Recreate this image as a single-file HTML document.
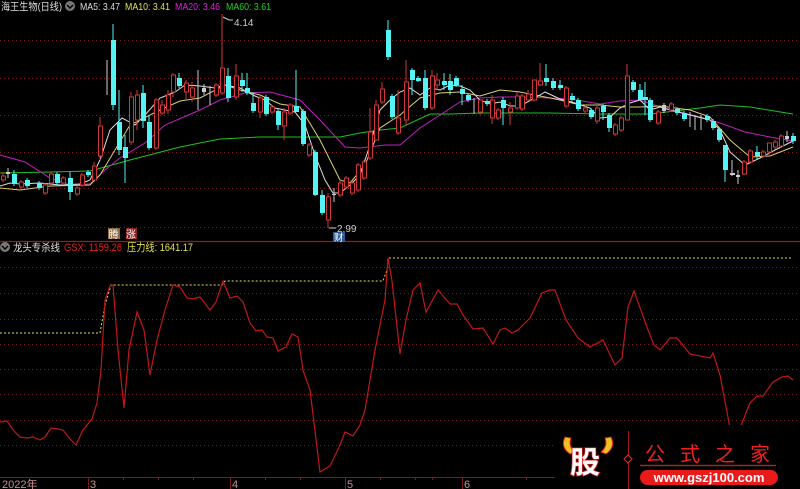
<!DOCTYPE html>
<html><head><meta charset="utf-8"><style>
html,body{margin:0;padding:0;background:#000;width:800px;height:489px;overflow:hidden}
svg{display:block}
text{font-family:"Liberation Sans","Noto Sans CJK SC",sans-serif}
</style></head><body>
<svg width="800" height="489" viewBox="0 0 800 489" xmlns="http://www.w3.org/2000/svg">
<rect width="800" height="489" fill="#000"/>
<g stroke="#7a1a1a" stroke-width="1" stroke-dasharray="1,3">
<line x1="0" y1="40.5" x2="800" y2="40.5"/><line x1="0" y1="78.5" x2="800" y2="78.5"/>
<line x1="0" y1="115.5" x2="800" y2="115.5"/><line x1="0" y1="152.5" x2="800" y2="152.5"/>
<line x1="0" y1="188.5" x2="800" y2="188.5"/><line x1="0" y1="227.5" x2="800" y2="227.5"/>
<line x1="0" y1="267.5" x2="800" y2="267.5"/><line x1="0" y1="293.5" x2="800" y2="293.5"/>
<line x1="0" y1="319.5" x2="800" y2="319.5"/><line x1="0" y1="344.5" x2="800" y2="344.5"/>
<line x1="0" y1="369.5" x2="800" y2="369.5"/><line x1="0" y1="394.5" x2="800" y2="394.5"/>
<line x1="0" y1="420.5" x2="800" y2="420.5"/><line x1="0" y1="445.5" x2="800" y2="445.5"/>
</g>
<line x1="0" y1="241.5" x2="800" y2="241.5" stroke="#a01818" stroke-width="1.2"/>
<line x1="0" y1="477.5" x2="800" y2="477.5" stroke="#7a1a1a" stroke-width="1"/>
<g stroke="#7a1a1a"><line x1="88.5" y1="477" x2="88.5" y2="489"/><line x1="230.5" y1="477" x2="230.5" y2="489"/><line x1="345.5" y1="477" x2="345.5" y2="489"/><line x1="462.5" y1="477" x2="462.5" y2="489"/>
<line x1="123.5" y1="477" x2="123.5" y2="480"/><line x1="158.5" y1="477" x2="158.5" y2="480"/><line x1="193.5" y1="477" x2="193.5" y2="480"/><line x1="265.5" y1="477" x2="265.5" y2="480"/><line x1="300.5" y1="477" x2="300.5" y2="480"/><line x1="380.5" y1="477" x2="380.5" y2="480"/><line x1="415.5" y1="477" x2="415.5" y2="480"/><line x1="432.5" y1="477" x2="432.5" y2="480"/><line x1="526.5" y1="477" x2="526.5" y2="480"/></g>
<g font-size="11" fill="#c89090"><text x="2" y="488">2022年</text><text x="90" y="488">3</text><text x="232" y="488">4</text><text x="347" y="488">5</text><text x="464" y="488">6</text></g>

<g fill="none" stroke-width="1">
<polyline stroke="#20c020" points="0,173 50,172 90,171 130,160 180,147 220,139 260,137 300,137 340,137 360,133 380,130 400,128 430,114 450,114 480,113 550,113 600,114 650,114 700,108 720,105 750,107 793,114"/>
<polyline stroke="#c020c0" points="0,155 25,162 50,178 70,185 90,184 105,170 120,158 145,143 165,125 200,110 220,100 245,93 270,92 300,100 320,120 345,147 360,148 385,145 400,145 420,128 440,115 460,102 480,98 500,97 520,97 550,98 570,99 600,104 620,101 640,100 660,107 680,112 700,117 720,123 745,132 770,137 793,141"/>
<polyline stroke="#d8d070" points="0,188 20,190 50,186 90,185 100,175 115,150 130,125 160,110 180,101 200,98 225,85 240,90 260,95 280,104 300,107 320,140 340,180 350,183 365,165 380,128 400,115 420,98 440,93 460,92 480,96 500,90 520,92 545,97 560,100 580,105 600,105 620,107 640,107 660,106 690,110 710,117 730,140 750,157 770,156 793,147"/>
<polyline stroke="#dddddd" points="0,186 10,183 20,184 40,183 60,185 80,184 90,180 100,160 110,130 122,118 135,125 145,115 160,98 175,92 185,85 200,86 215,88 225,85 240,88 255,96 265,100 275,108 285,110 295,112 305,125 315,155 325,180 333,193 340,193 350,185 360,175 370,145 380,110 390,100 400,92 410,88 420,95 430,88 440,90 450,85 460,86 470,90 480,100 490,104 500,102 510,106 520,106 535,98 545,92 560,99 575,103 590,108 600,118 610,117 620,108 630,103 640,100 650,110 660,107 670,110 690,115 710,120 720,130 730,152 745,165 760,158 775,150 793,141"/>
</g>

<path stroke="#d03838" stroke-width="1" fill="none" d="M3 172V182M21 180V189M45 183V195M51 172V185M63 176V185M77 186V196M82 173V187M94 162V180M100 117V160M131 92V145M137 90V130M156 98V150M162 100V115M168 90V114M173 73V97M186 80V99M192 82V102M216 83V97M222 14V95M236 64V100M260 95V118M272 105V114M284 108V140M290 103V115M309 143V157M328 193V228M340 181V197M346 176V189M352 181V195M358 163V192M364 160V180M370 108V160M376 100V140M382 82V104M398 90V135M406 60V125M432 70V110M437 73V90M480 100V115M492 95V124M498 108V120M510 102V125M517 92V110M522 94V111M528 90V100M534 80V101M540 63V86M566 86V108M585 106V113M597 106V124M615 123V136M621 116V132M627 64V120M658 110V125M671 102V112M744 160V175M750 149V164M763 150V158M769 143V155M775 140V149M781 134V148"/>
<path stroke="#54f0f0" stroke-width="1" fill="none" d="M14 170V186M27 178V188M39 181V190M57 172V185M70 172V200M88 170V177M113 24V110M119 90V155M125 135V183M143 85V128M149 115V150M179 73V88M228 68V102M242 73V92M247 73V95M253 92V113M266 95V116M278 109V130M296 70V112M303 109V146M315 150V196M322 190V215M388 20V60M392 94V119M412 68V95M418 76V82M425 70V110M444 73V90M450 74V95M456 76V87M462 85V105M468 93V102M487 99V106M503 97V125M546 64V86M553 78V90M560 80V90M572 93V102M578 98V111M591 108V119M603 104V120M609 113V132M633 80V92M640 84V100M645 82V115M650 98V122M677 107V115M684 111V121M707 114V122M713 119V130M719 127V142M725 145V182M757 146V160M793 133V144"/>
<path stroke="#cccccc" stroke-width="1" fill="none" d="M8 168V178M107 60V95M198 70V110M204 84V95M210 86V105M334 188V202M474 98V114M664 103V113M690 112V127M695 115V130M701 115V130M732 160V176M738 170V184M787 131V142"/>
<g fill="#000" stroke="#d03838" stroke-width="1">
<rect x="1.5" y="176" width="4" height="4"/><rect x="19.5" y="182" width="4" height="5"/><rect x="43.5" y="185" width="4" height="8"/><rect x="49.5" y="174" width="4" height="9"/><rect x="61.5" y="178" width="4" height="5"/><rect x="75.5" y="188" width="4" height="6"/><rect x="80.5" y="175" width="4" height="10"/><rect x="92.5" y="166" width="4" height="14"/><rect x="98.5" y="126" width="4" height="30"/><rect x="129.5" y="97" width="4" height="45"/><rect x="135.5" y="95" width="4" height="25"/><rect x="154.5" y="100" width="4" height="48"/><rect x="160.5" y="105" width="4" height="8"/><rect x="166.5" y="95" width="4" height="15"/><rect x="171.5" y="75" width="4" height="17"/><rect x="184.5" y="83" width="4" height="9"/><rect x="190.5" y="88" width="4" height="9"/><rect x="214.5" y="85" width="4" height="10"/><rect x="220.5" y="68" width="4" height="25"/><rect x="234.5" y="76" width="4" height="21"/><rect x="258.5" y="98" width="4" height="14"/><rect x="270.5" y="107" width="4" height="5"/><rect x="282.5" y="112" width="4" height="14"/><rect x="288.5" y="105" width="4" height="8"/><rect x="307.5" y="145" width="4" height="10"/><rect x="326.5" y="197" width="4" height="23"/><rect x="338.5" y="183" width="4" height="12"/><rect x="344.5" y="178" width="4" height="9"/><rect x="350.5" y="183" width="4" height="10"/><rect x="356.5" y="165" width="4" height="25"/><rect x="362.5" y="162" width="4" height="16"/><rect x="368.5" y="132" width="4" height="26"/><rect x="374.5" y="105" width="4" height="35"/><rect x="380.5" y="89" width="4" height="13"/><rect x="396.5" y="118" width="4" height="15"/><rect x="404.5" y="82" width="4" height="38"/><rect x="430.5" y="76" width="4" height="32"/><rect x="435.5" y="80" width="4" height="5"/><rect x="478.5" y="100" width="4" height="12"/><rect x="490.5" y="100" width="4" height="18"/><rect x="496.5" y="110" width="4" height="8"/><rect x="508.5" y="108" width="4" height="4"/><rect x="515.5" y="96" width="4" height="12"/><rect x="520.5" y="96" width="4" height="13"/><rect x="526.5" y="94" width="4" height="6"/><rect x="532.5" y="80" width="4" height="20"/><rect x="538.5" y="81" width="4" height="4"/><rect x="564.5" y="88" width="4" height="18"/><rect x="583.5" y="108" width="4" height="3"/><rect x="595.5" y="108" width="4" height="13"/><rect x="613.5" y="125" width="4" height="9"/><rect x="619.5" y="118" width="4" height="12"/><rect x="625.5" y="76" width="4" height="44"/><rect x="656.5" y="112" width="4" height="11"/><rect x="669.5" y="104" width="4" height="6"/><rect x="742.5" y="162" width="4" height="12"/><rect x="748.5" y="151" width="4" height="11"/><rect x="761.5" y="152" width="4" height="4"/><rect x="767.5" y="143" width="4" height="9"/><rect x="773.5" y="142" width="4" height="5"/><rect x="779.5" y="136" width="4" height="10"/>
</g>
<g fill="#54f4f4">
<rect x="12" y="174" width="5" height="10"/><rect x="25" y="180" width="5" height="6"/><rect x="37" y="183" width="5" height="5"/><rect x="55" y="174" width="5" height="9"/><rect x="68" y="178" width="5" height="14"/><rect x="86" y="172" width="5" height="3"/><rect x="111" y="40" width="5" height="65"/><rect x="117" y="122" width="5" height="28"/><rect x="123" y="147" width="5" height="11"/><rect x="141" y="93" width="5" height="28"/><rect x="147" y="122" width="5" height="26"/><rect x="177" y="78" width="5" height="8"/><rect x="226" y="76" width="5" height="22"/><rect x="240" y="80" width="5" height="6"/><rect x="245" y="88" width="5" height="5"/><rect x="251" y="103" width="5" height="8"/><rect x="264" y="97" width="5" height="17"/><rect x="276" y="111" width="5" height="14"/><rect x="294" y="106" width="5" height="6"/><rect x="301" y="111" width="5" height="33"/><rect x="313" y="152" width="5" height="43"/><rect x="320" y="195" width="5" height="18"/><rect x="386" y="30" width="5" height="27"/><rect x="390" y="96" width="5" height="21"/><rect x="410" y="70" width="5" height="10"/><rect x="416" y="78" width="5" height="3"/><rect x="423" y="78" width="5" height="30"/><rect x="442" y="81" width="5" height="4"/><rect x="448" y="81" width="5" height="9"/><rect x="454" y="78" width="5" height="7"/><rect x="460" y="89" width="5" height="5"/><rect x="466" y="95" width="5" height="5"/><rect x="485" y="101" width="5" height="3"/><rect x="501" y="100" width="5" height="8"/><rect x="544" y="78" width="5" height="4"/><rect x="551" y="81" width="5" height="7"/><rect x="558" y="85" width="5" height="3"/><rect x="570" y="96" width="5" height="4"/><rect x="576" y="100" width="5" height="9"/><rect x="589" y="110" width="5" height="7"/><rect x="601" y="106" width="5" height="6"/><rect x="607" y="115" width="5" height="13"/><rect x="631" y="82" width="5" height="8"/><rect x="638" y="90" width="5" height="10"/><rect x="643" y="97" width="5" height="3"/><rect x="648" y="100" width="5" height="20"/><rect x="675" y="109" width="5" height="4"/><rect x="682" y="113" width="5" height="6"/><rect x="705" y="116" width="5" height="4"/><rect x="711" y="121" width="5" height="7"/><rect x="717" y="129" width="5" height="11"/><rect x="723" y="145" width="5" height="25"/><rect x="755" y="152" width="5" height="4"/><rect x="791" y="136" width="5" height="5"/>
</g>
<g fill="#ccc"><rect x="6" y="172" width="4" height="2"/><rect x="202" y="88" width="4" height="4"/><rect x="662" y="105" width="4" height="6"/><rect x="730" y="173" width="5" height="2"/><rect x="736" y="175" width="4" height="2"/><rect x="785" y="136" width="4" height="3"/><rect x="332" y="194" width="4" height="1"/></g>

<path d="M223 17 L229 20 L233 20" stroke="#ccc" fill="none"/>
<text x="234" y="26" font-size="10" fill="#ccc">4.14</text>
<path d="M329 228 H336" stroke="#ccc"/><text x="337" y="232" font-size="10" fill="#ccc">2.99</text>
<rect x="333" y="232" width="12" height="10" fill="#2a5a9a"/><text x="334" y="241" font-size="9.5" fill="#fff">财</text>
<rect x="108" y="228" width="12" height="11" fill="#8a6a40"/><text x="108.5" y="238" font-size="10" fill="#fff">腾</text>
<rect x="126" y="228" width="11" height="11" fill="#8a2020"/><text x="126" y="238" font-size="10" fill="#fff">涨</text>

<text x="1" y="10" font-size="10.5" fill="#dddddd" textLength="61" lengthAdjust="spacingAndGlyphs">海王生物(日线)</text>
<circle cx="70" cy="6" r="5" fill="#777"/><path d="M67 5 L70 8 L73 5" stroke="#000" stroke-width="1.4" fill="none"/>
<text x="80" y="10" font-size="10.5" fill="#dddddd" textLength="40" lengthAdjust="spacingAndGlyphs">MA5: 3.47</text>
<text x="125" y="10" font-size="10.5" fill="#e0e050" textLength="45" lengthAdjust="spacingAndGlyphs">MA10: 3.41</text>
<text x="175" y="10" font-size="10.5" fill="#e020e0" textLength="45" lengthAdjust="spacingAndGlyphs">MA20: 3.46</text>
<text x="226" y="10" font-size="10.5" fill="#20d020" textLength="45" lengthAdjust="spacingAndGlyphs">MA60: 3.61</text>

<circle cx="5" cy="247" r="5" fill="#777"/><path d="M2 246 L5 249 L8 246" stroke="#000" stroke-width="1.4" fill="none"/>
<text x="13" y="251" font-size="10.5" fill="#dddddd" textLength="47" lengthAdjust="spacingAndGlyphs">龙头专杀线</text>
<text x="64" y="251" font-size="11" fill="#e02020" textLength="58" lengthAdjust="spacingAndGlyphs">GSX: 1159.26</text>
<text x="127" y="251" font-size="11" fill="#e0e050" textLength="66" lengthAdjust="spacingAndGlyphs">压力线: 1641.17</text>

<polyline fill="none" stroke="#e0e050" stroke-width="1" stroke-dasharray="2,2" points="0,333 100,333 105,305 111,285 222,285 225,281 383,281 387,270 388,258 793,258"/>
<polyline fill="none" stroke="#c01818" stroke-width="1.2" points="0,422 7,421 13,430 20,437 27,438 33,437 40,440 45,437 51,428 58,429 63,430 70,439 76,445 83,430 92,419 97,403 101,370 105,300 110,286 113,285 118,350 124,408 129,350 137,312 144,330 150,375 157,340 165,310 173,285 180,287 187,298 193,299 200,297 210,310 216,302 223,281 230,298 237,296 243,302 250,323 256,331 262,330 267,337 273,338 278,351 286,347 292,334 298,337 303,370 310,390 320,472 330,466 340,445 345,432 353,436 360,425 365,410 375,350 385,300 388,258 392,281 400,354 406,320 413,290 420,283 426,312 438,290 450,304 457,304 463,315 473,329 483,328 488,336 493,344 500,330 505,328 512,333 518,330 530,318 542,293 550,290 555,290 566,320 578,338 590,347 603,340 615,365 622,358 628,307 634,291 648,330 654,345 660,350 670,338 677,338 690,354 710,358 713,353 720,375 730,428 735,440 738,433 750,403 757,396 763,396 773,382 782,377 788,376 793,380"/>

<rect x="555" y="425" width="245" height="64" fill="#000"/>
<path d="M565 437 Q560 447 570 454 L575 452 Q568 446 571 438 Z" fill="#f0c020" stroke="#e02020"/>
<path d="M611 437 Q616 447 606 454 L601 452 Q608 446 605 438 Z" fill="#f0c020" stroke="#e02020"/>
<text x="570" y="473" font-size="30" font-weight="bold" fill="#fff" stroke="#e02020" stroke-width="1.5" paint-order="stroke">股</text>
<line x1="628.5" y1="431" x2="628.5" y2="489" stroke="#a01818"/>
<path d="M628 455 L632 459 L628 463 L624 459 Z" fill="#000" stroke="#e03030"/>
<text x="645" y="461" font-size="20" fill="#f02020" textLength="125" lengthAdjust="spacing" font-family="'Noto Serif CJK SC',serif">公式之家</text>
<line x1="640" y1="465.5" x2="776" y2="465.5" stroke="#8a3030" stroke-width="1.5"/>
<rect x="640" y="470" width="138" height="15" rx="7.5" fill="#e81a1a"/>
<text x="709" y="482" font-size="13" font-weight="bold" fill="#fff" text-anchor="middle">www.gszj100.com</text>
</svg>
</body></html>
